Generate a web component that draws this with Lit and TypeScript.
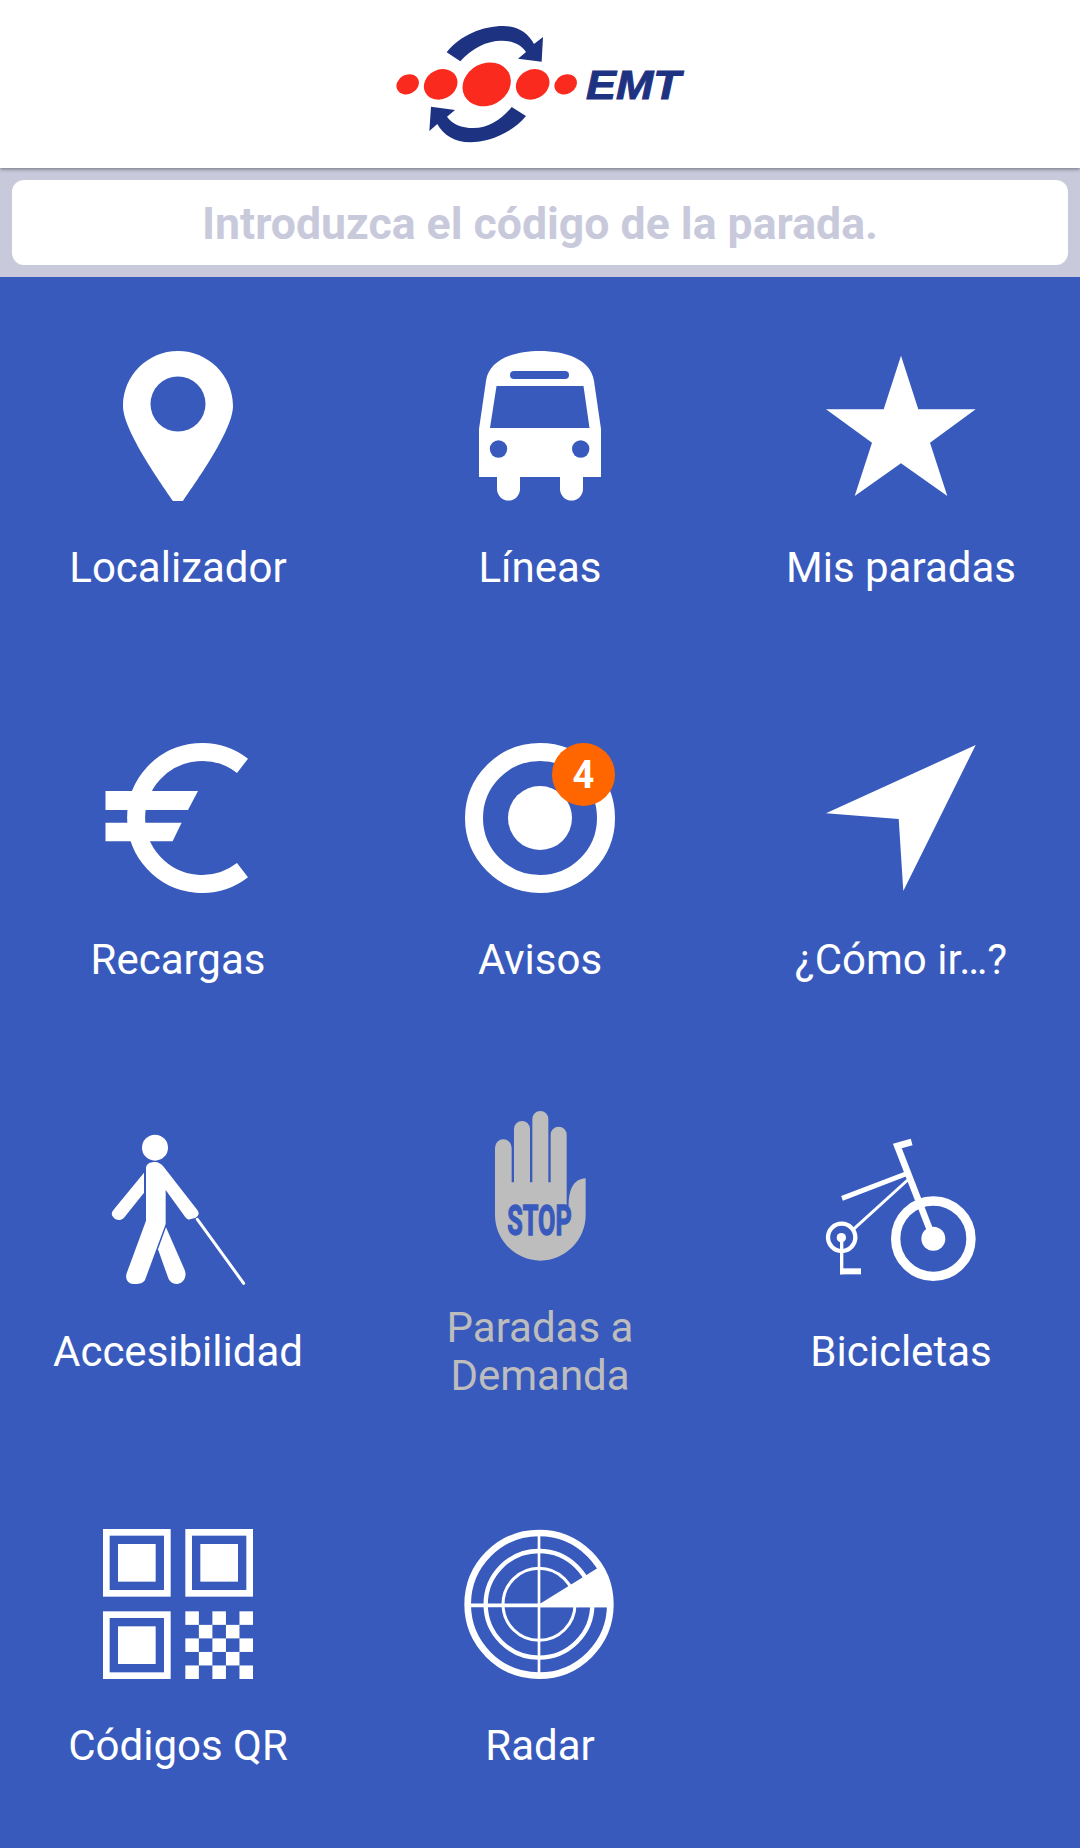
import { LitElement, css, html, svg } from "lit";
import { customElement } from "lit/decorators.js";

const BLUE = "#385abc";

const logo = html`<svg class="logo" viewBox="0 0 1080 504">
  <g fill="#1e3282">
    <path d="M260 157 C300 105 370 78 430 78 C475 78 505 100 522 132 L549 111 L545 185 L474 176 L498 156 C485 135 460 122 425 122 C380 122 335 145 301 184 Z"/>
    <path d="M498 348 C455 400 385 427 330 427 C285 427 250 405 232 372 L208 393 L213 320 L285 330 L261 350 C275 372 305 384 340 384 C385 384 425 358 455 321 Z"/>
  </g>
  <g fill="#fa2a1e">
    <ellipse cx="143" cy="253" rx="35" ry="29" transform="rotate(-28 143 253)"/>
    <ellipse cx="242" cy="253" rx="52" ry="44" transform="rotate(-28 242 253)"/>
    <ellipse cx="380" cy="253" rx="75" ry="63" transform="rotate(-28 380 253)"/>
    <ellipse cx="518" cy="253" rx="52" ry="44" transform="rotate(-28 518 253)"/>
    <ellipse cx="617" cy="253" rx="35" ry="29" transform="rotate(-28 617 253)"/>
  </g>
  <text x="678" y="297" class="emt" textLength="284" lengthAdjust="spacingAndGlyphs">EMT</text>
</svg>`;

const pin = svg`<path fill="#fff" fill-rule="evenodd" d="M75 0 C105.4 0 130 24.6 130 55 C130 80 90 135 80 150 L70 150 C60 135 20 80 20 55 C20 24.6 44.6 0 75 0 Z M75 25.5 A27.5 27.5 0 1 0 75 80.5 A27.5 27.5 0 1 0 75 25.5 Z"/>`;

const bus = svg`
  <path fill="#fff" d="M14 78 L21 30 C24 8 50 0 75 0 C100 0 126 8 129 30 L136 78 V126 H118 V138 A11.5 11.5 0 0 1 95 138 V126 H55 V138 A11.5 11.5 0 0 1 32 138 V126 H14 Z"/>
  <g fill=${BLUE}>
    <path d="M31.5 35 H118.5 L124.5 77 H25 Z"/>
    <rect x="45" y="20" width="59" height="8" rx="4"/>
    <circle cx="33.5" cy="98" r="8.7"/>
    <circle cx="115.7" cy="98" r="8.7"/>
  </g>`;

const star = svg`<polygon fill="#fff" points="75,4.7 92.3,58.3 149.7,58.3 104,91.7 121.3,145 75,112.3 28.7,145 46,91.7 0,58.3 57.7,58.3"/>`;

const euro = svg`
  <path fill="none" stroke="#fff" stroke-width="18" d="M139.5 22.8 A66 66 0 1 0 139.5 127.2"/>
  <polygon fill="#fff" points="2.5,48 95,48 85,67 2.5,67"/>
  <polygon fill="#fff" points="2.5,79.7 78.6,79.7 69.6,98.3 2.5,98.3"/>`;

const target = svg`
  <circle cx="75" cy="75" r="66" fill="none" stroke="#fff" stroke-width="18"/>
  <circle cx="75" cy="75" r="32" fill="#fff"/>`;

const nav = svg`<polygon fill="#fff" points="149.7,2 0,70.3 72.7,76 77.3,148"/>`;

const walker = svg`<g fill="#fff">
  <circle cx="195" cy="143" r="39"/>
  <path d="M168 205 C168 192 180 186 195 186 C205 186 215 192 222 202 L322 330 C330 340 325 350 315 354 L300 358 C295 360 290 356 285 350 L227 270 V372 L165 540 C160 550 145 553 130 552 C112 550 105 535 110 520 L168 362 Z"/>
  <path d="M162 218 V278 L102 353 C92 363 78 362 70 352 C62 342 66 335 72 328 Z"/>
  <path d="M228 382 L284 510 C292 530 280 550 262 552 C248 553 240 545 235 535 L204 448 Z"/>
  <line x1="322" y1="358" x2="461" y2="550" stroke="#fff" stroke-width="9" stroke-linecap="round"/>
</g>`;

const hand = svg`
  <path fill="#bdbdbd" d="M75 143 A25 25 0 0 1 125 143 V247 H132 V87 A24 24 0 0 1 180 87 V247 H187 V57 A24 24 0 0 1 235 57 V247 H242 V104 A24 24 0 0 1 290 104 V318 H296 C296 270 310 237 347 235 V346 C347 420 285 482 211 482 C137 482 75 420 75 346 Z"/>
  <text x="112" y="405" class="stop" fill=${BLUE} stroke=${BLUE} stroke-width="4" textLength="193" lengthAdjust="spacingAndGlyphs">STOP</text>`;

const bike = svg`<g fill="none" stroke="#fff">
  <circle cx="370" cy="326" r="113" stroke-width="28"/>
  <circle cx="370" cy="326" r="36" fill="#fff" stroke="none"/>
  <path d="M305 36 L262 48 L370 326" stroke-width="20"/>
  <line x1="96" y1="205" x2="287" y2="132" stroke-width="15"/>
  <line x1="293" y1="150" x2="130" y2="298" stroke-width="9"/>
  <circle cx="95" cy="322" r="41" stroke-width="13"/>
  <circle cx="94" cy="323" r="14" fill="#fff" stroke="none"/>
  <rect x="90" y="330" width="10" height="103" fill="#fff" stroke="none"/>
  <rect x="90" y="415" width="63" height="18" fill="#fff" stroke="none"/>
</g>`;

const finder = (x: number, y: number) => svg`
  <rect x=${x + 10} y=${y + 10} width="183" height="183" fill="none" stroke="#fff" stroke-width="20"/>
  <rect x=${x + 45} y=${y + 45} width="113" height="113" fill="#fff"/>`;

const checks = [0, 1, 2, 3, 4].flatMap((r) =>
  [0, 1, 2, 3, 4]
    .filter((c) => (r + c) % 2 === 0)
    .map((c) => svg`<rect x=${286 + c * 40.6} y=${289 + r * 40.6} width="40.6" height="40.6" fill="#fff"/>`)
);

const qr = svg`${finder(39, 42)}${finder(286, 42)}${finder(39, 289)}${checks}`;

const radar = svg`<g fill="none" stroke="#fff">
  <circle cx="267" cy="268" r="214" stroke-width="20"/>
  <circle cx="267" cy="268" r="160" stroke-width="13"/>
  <circle cx="267" cy="268" r="108" stroke-width="9"/>
  <line x1="267" y1="50" x2="267" y2="486" stroke-width="8"/>
  <line x1="50" y1="271" x2="486" y2="271" stroke-width="11"/>
  <path fill="#fff" stroke="none" d="M270 266 L442 160 A224 224 0 0 1 490 277 H270 Z"/>
</g>`;

const items = [
  { label: "Localizador", box: "0 0 150 150", icon: pin },
  { label: "Líneas", box: "0 0 150 150", icon: bus },
  { label: "Mis paradas", box: "0 0 150 150", icon: star },
  { label: "Recargas", box: "0 0 150 150", icon: euro },
  { label: "Avisos", box: "0 0 150 150", icon: target, badge: 4 },
  { label: "¿Cómo ir…?", box: "0 0 150 150", icon: nav },
  { label: "Accesibilidad", box: "39 105 450 450", icon: walker },
  { label: "Paradas a Demanda", box: "-15 33 450 450", icon: hand, off: true },
  { label: "Bicicletas", box: "48 15 450 450", icon: bike },
  { label: "Códigos QR", box: "39 42 450 450", icon: qr },
  { label: "Radar", box: "45 42 450 450", icon: radar },
];

@customElement("app-root")
export class AppRoot extends LitElement {
  render() {
    return html`
      <header class="top">${logo}</header>
      <div class="search-band">
        <div class="search">Introduzca el código de la parada.</div>
      </div>
      <main class="grid">
        ${items.map(
          (it) => html`
            <div class="cell ${it.off ? "off" : ""}">
              <div class="icon">
                <svg viewBox=${it.box}>${it.icon}</svg>
                ${it.badge ? html`<span class="badge">${it.badge}</span>` : null}
              </div>
              <div class="label">${it.label}</div>
            </div>
          `
        )}
      </main>
    `;
  }

  static styles = css`
    :host {
      display: block;
      width: 1080px;
      min-height: 1848px;
      background: #385abc;
      font-family: Roboto, sans-serif;
    }

    .top {
      position: relative;
      z-index: 1;
      height: 168px;
      display: flex;
      justify-content: center;
      background: #fff;
      box-shadow: 0 1px 4px rgba(0, 0, 0, 0.45);
    }

    .logo {
      width: 360px;
      height: 168px;
    }

    .emt {
      font-family: "Liberation Sans", sans-serif;
      font-weight: bold;
      font-style: italic;
      font-size: 124px;
      fill: #1e3282;
      stroke: #1e3282;
      stroke-width: 3px;
    }

    .stop {
      font-family: Roboto, sans-serif;
      font-weight: bold;
      font-size: 126px;
    }

    .search-band {
      padding: 12px;
      background: #c8cadc;
    }

    .search {
      height: 85px;
      padding-top: 3px;
      box-sizing: border-box;
      display: flex;
      align-items: center;
      justify-content: center;
      border-radius: 12px;
      background: #fff;
      color: #c8cadc;
      font-size: 44.6px;
      font-weight: bold;
    }

    .grid {
      display: grid;
      grid-template-columns: 356px 368px 354px;
      grid-template-rows: 392px 392px 392px 395px;
    }

    .cell {
      display: flex;
      flex-direction: column;
      align-items: center;
      justify-content: center;
      gap: 43px;
      padding-bottom: 3px;
      box-sizing: border-box;
      color: #fff;
    }

    .cell.off {
      color: #bdbdbd;
    }

    .icon {
      position: relative;
      width: 150px;
      height: 150px;
    }

    .icon svg {
      display: block;
      width: 150px;
      height: 150px;
      overflow: visible;
    }

    .badge {
      position: absolute;
      top: 0;
      right: 0;
      width: 63px;
      height: 63px;
      display: flex;
      align-items: center;
      justify-content: center;
      border-radius: 50%;
      background: #ff6600;
      color: #fff;
      font-size: 38px;
      font-weight: bold;
    }

    .label {
      width: 300px;
      text-align: center;
      font-size: 42px;
      line-height: 48px;
    }
  `;
}
